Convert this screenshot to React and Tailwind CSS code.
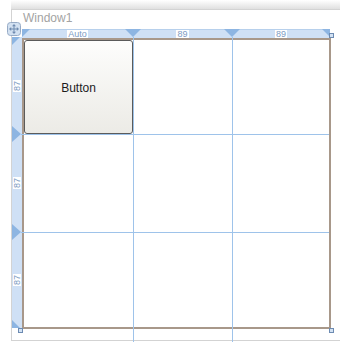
import React from "react";

const RULER_BG = "#cfe0f5";
const TRI = "#8db5e2";

function MoveIcon() {
  return (
    <svg width="14" height="14" viewBox="0 0 14 14">
      <rect x="0.5" y="0.5" width="13" height="13" rx="3" fill="#d3e1f1" stroke="#97abc6" />
      <g fill="#6f8bb0">
        <path d="M7 2 L9 4.2 H5 Z" />
        <path d="M7 12 L9 9.8 H5 Z" />
        <path d="M2 7 L4.2 5 V9 Z" />
        <path d="M12 7 L9.8 5 V9 Z" />
        <rect x="6.5" y="4" width="1" height="6" />
        <rect x="4" y="6.5" width="6" height="1" />
      </g>
    </svg>
  );
}

function Label({ children, vertical }) {
  return (
    <span
      className={
        "bg-white text-[#7d9bc3] text-[9px] leading-[8px] px-[1px] font-['Liberation_Sans',sans-serif] whitespace-nowrap " +
        (vertical ? "-rotate-90 inline-block" : "")
      }
    >
      {children}
    </span>
  );
}

function Handle({ className }) {
  return <div className={"absolute w-[5px] h-[5px] bg-[#d3e2f3] border border-[#6d8bb2] " + className} />;
}

export default function App() {
  return (
    <div className="relative w-[340px] h-[342px] bg-white overflow-hidden font-['Liberation_Sans',sans-serif]">
      {/* top shadow */}
      <div className="absolute top-0 left-[11px] right-0 h-[9px] bg-gradient-to-b from-[#ffffff] to-[#e0e0e0]" />

      {/* window */}
      <div className="ml-[11px] mt-[9px] h-[332px] border-l border-t border-b border-[#d3d3d3]">
        <div className="h-[19px] pl-[11px] pt-[2px] text-[12px] leading-[13px] text-[#a3a3a3]">Window1</div>

        <div className="flex">
          {/* left ruler */}
          <div className="relative mt-[8px] w-[10px] h-[291px] flex flex-col" style={{ background: RULER_BG }}>
            <svg className="absolute inset-0" width="10" height="291" viewBox="0 0 10 291">
              <path d="M0 0 H8 L0 8 Z" fill={TRI} />
              <path d="M0 89 L9 97 L0 105 Z" fill={TRI} />
              <path d="M0 187 L9 195 L0 203 Z" fill={TRI} />
              <path d="M0 291 H8 L0 283 Z" fill={TRI} />
            </svg>
            <div className="relative h-[97px] flex items-center justify-center"><Label vertical>87</Label></div>
            <div className="relative h-[98px] flex items-center justify-center"><Label vertical>87</Label></div>
            <div className="relative h-[96px] flex items-center justify-center"><Label vertical>87</Label></div>
          </div>

          <div className="flex flex-col">
            {/* top ruler */}
            <div className="relative w-[308px] h-[9px] flex border-t border-[#b7d0ec]" style={{ background: RULER_BG }}>
              <svg className="absolute left-0 top-[-1px]" width="308" height="9" viewBox="0 0 308 9">
                <path d="M0 0 H8 L0 8 Z" fill={TRI} />
                <path d="M103 0 H119 L111 8 Z" fill={TRI} />
                <path d="M202 0 H218 L210 8 Z" fill={TRI} />
                <path d="M300 0 H308 V8 Z" fill={TRI} />
              </svg>
              <div className="relative w-[111px] flex items-center justify-center"><Label>Auto</Label></div>
              <div className="relative w-[99px] flex items-center justify-center"><Label>89</Label></div>
              <div className="relative w-[98px] flex items-center justify-center"><Label>89</Label></div>
            </div>

            {/* layout grid */}
            <div className="w-[309px] h-[291px] border-2 border-[#a8988a] bg-white grid grid-cols-[110px_99px_96px] grid-rows-[95px_98px_94px]">
              <div className="pr-[1px] pb-[1px]">
                <button className="w-full h-full rounded-[3px] border border-[#5b5b5b] bg-gradient-to-b from-[#fdfdfc] to-[#ecebe6] text-[12px] text-[#1c1c1c] pt-[2px] font-['Liberation_Sans',sans-serif]">
                  Button
                </button>
              </div>
            </div>
          </div>
        </div>
      </div>

      {/* grid guide lines (adorners) */}
      <div className="absolute left-[133px] top-[37px] w-px h-[305px] bg-[#9ec3ea]" />
      <div className="absolute left-[232px] top-[37px] w-px h-[305px] bg-[#9ec3ea]" />
      <div className="absolute left-[21px] top-[134px] w-[308px] h-px bg-[#9ec3ea]" />
      <div className="absolute left-[21px] top-[232px] w-[308px] h-px bg-[#9ec3ea]" />

      {/* move handle */}
      <div className="absolute left-[7px] top-[22px]">
        <MoveIcon />
      </div>

      {/* corner handles */}
      <Handle className="left-[329px] top-[33px]" />
      <Handle className="left-[18px] top-[328px]" />
      <Handle className="left-[329px] top-[328px]" />
    </div>
  );
}
